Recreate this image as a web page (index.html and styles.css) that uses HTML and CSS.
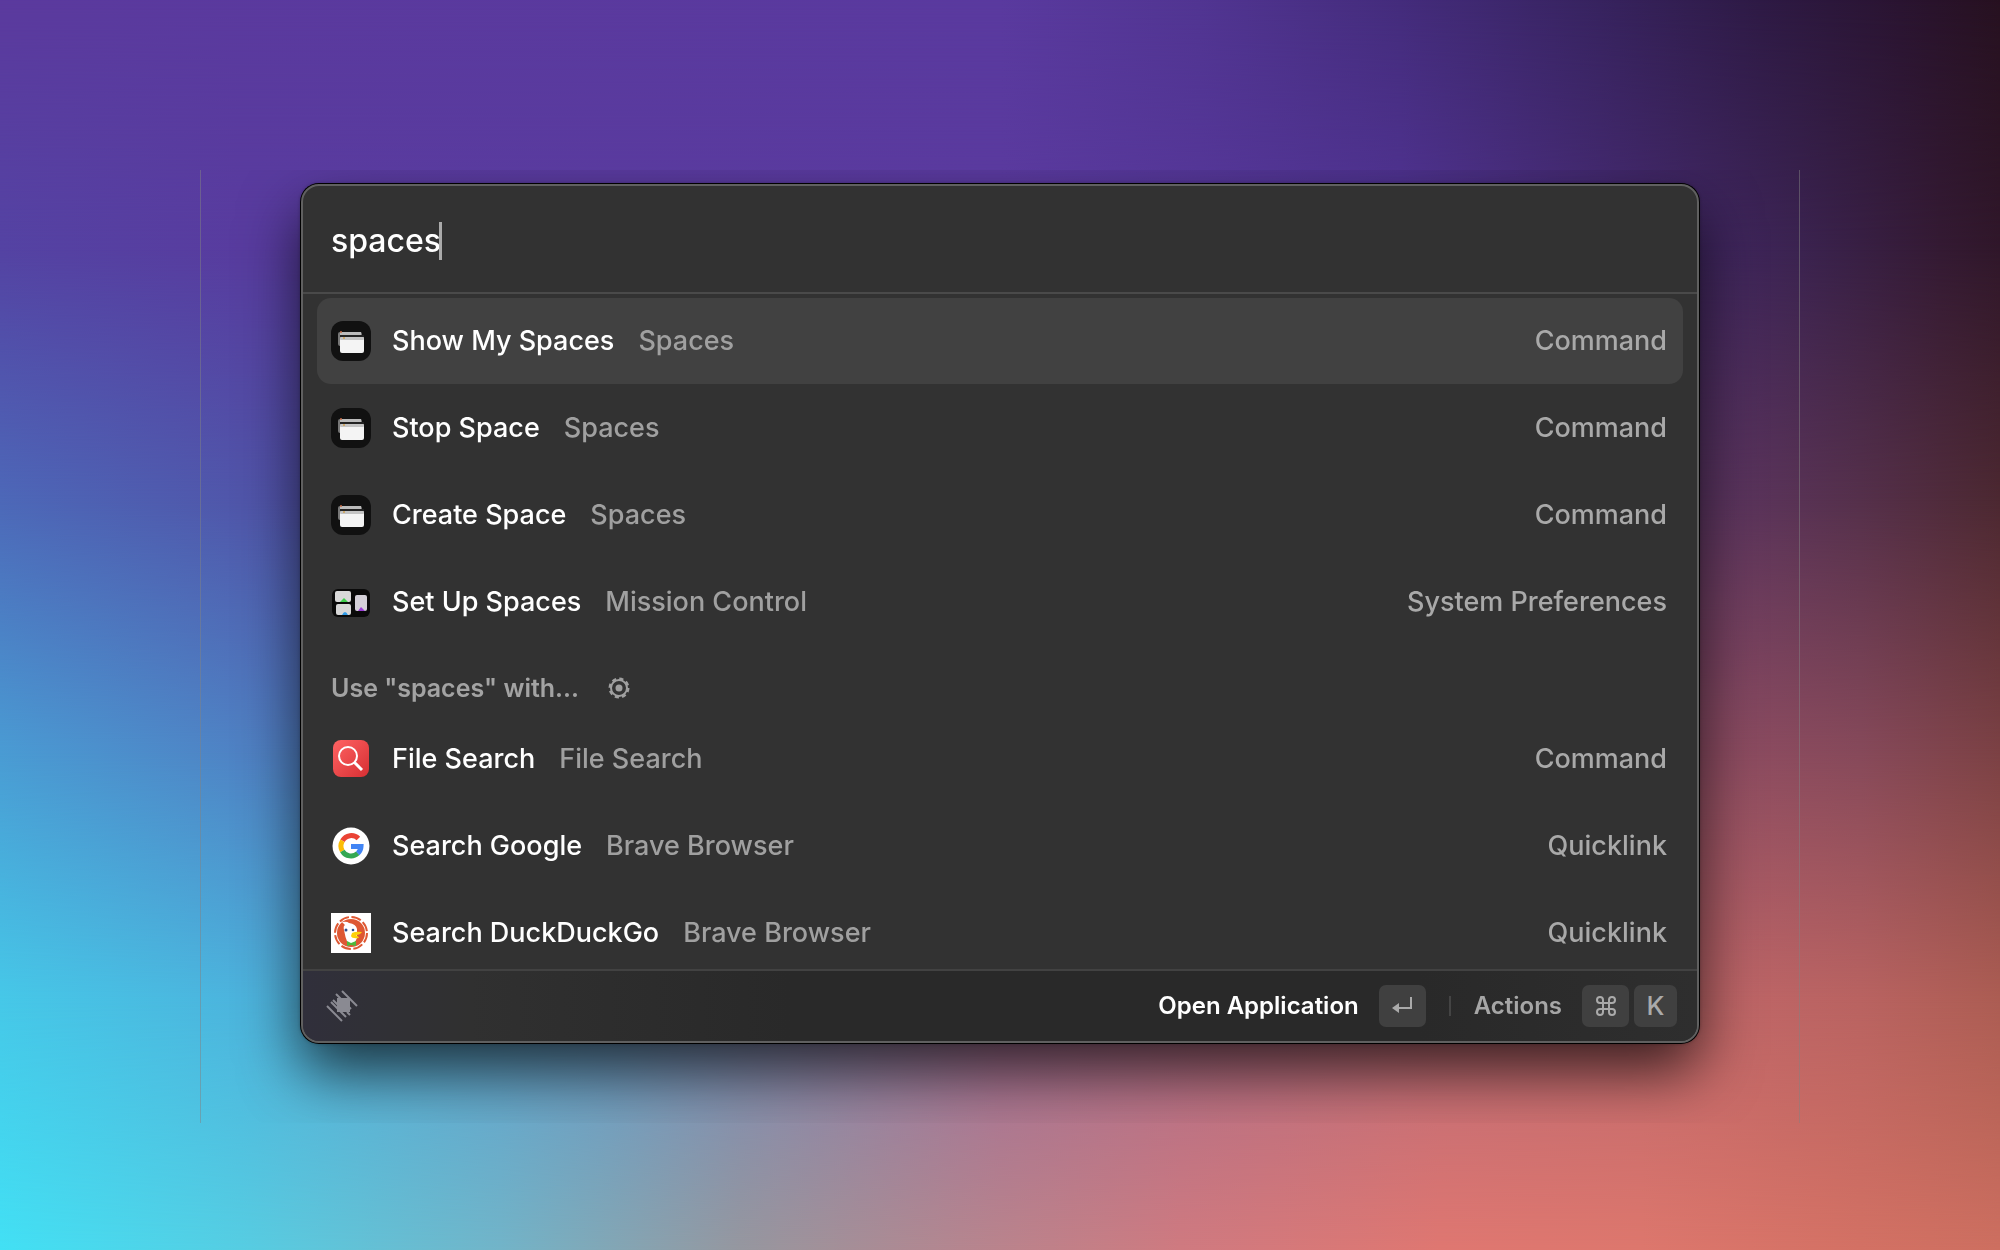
FILE: index.html
```html
<!DOCTYPE html>
<html lang="en">
<head>
<meta charset="utf-8">
<title>Launcher</title>
<link rel="stylesheet" href="styles.css">
</head>
<body>
<svg class="defs" aria-hidden="true">
  <symbol id="spaces" viewBox="0 0 40 40">
    <rect width="40" height="40" rx="12" fill="#111"/>
    <rect x="7" y="11" width="24" height="14" rx="2" fill="#777"/>
    <rect x="9" y="11" width="21" height="3" fill="#bbb"/>
    <rect x="9" y="14" width="24" height="3" fill="#222"/>
    <rect x="9" y="16" width="24" height="16" rx="2" fill="#f4f4f4"/>
    <rect x="9" y="16" width="24" height="3" rx="1" fill="#c4c4c4"/>
    <circle cx="10" cy="11" r="1" fill="#c76b45"/><circle cx="13" cy="17" r="1" fill="#d0a050"/>
  </symbol>
</svg>
<div class="backdrop" aria-hidden="true">
  <div class="band band-1"></div>
  <div class="band band-2"></div>
  <div class="band band-3"></div>
  <div class="band band-4"></div>
  <div class="band band-5"></div>
  <div class="band band-6"></div>
</div>
<main class="stage">
  <section class="window" aria-label="Launcher">
    <div class="search">
      <input class="query" type="text" value="spaces" aria-label="Search">
      <span class="caret"></span>
    </div>
    <div class="results">
      <ul class="list">
        <li><button class="row selected"><svg class="icon"><use href="#spaces"/></svg><span class="title">Show My Spaces</span><span class="sub">Spaces</span><span class="kind">Command</span></button></li>
        <li><button class="row"><svg class="icon"><use href="#spaces"/></svg><span class="title">Stop Space</span><span class="sub">Spaces</span><span class="kind">Command</span></button></li>
        <li><button class="row"><svg class="icon"><use href="#spaces"/></svg><span class="title">Create Space</span><span class="sub">Spaces</span><span class="kind">Command</span></button></li>
        <li><button class="row"><svg class="icon" viewBox="0 0 40 40">
          <rect x="1" y="7" width="38" height="28" rx="6" fill="#0a0a0a"/>
          <rect x="4" y="9" width="16" height="11" rx="2" fill="#d8d8d8"/><rect x="5" y="22" width="15" height="11" rx="2" fill="#d8d8d8"/><rect x="24" y="13" width="12" height="16" rx="2" fill="#d4d0d8"/>
          <path d="M9 20l4-4 4 4z" fill="#3fce4c"/><path d="M11 33q3-6 6 0z" fill="#2f9be8"/><path d="M27 29l3-4 4 4z" fill="#9a3fd6"/>
        </svg><span class="title">Set Up Spaces</span><span class="sub">Mission Control</span><span class="kind">System Preferences</span></button></li>
      </ul>
      <div class="heading"><h2>Use "spaces" with...</h2>
        <button class="gear" aria-label="Configure fallback commands"><svg viewBox="0 0 24 24" width="24" height="24"><circle cx="12" cy="12" r="9" fill="none" stroke="#a0a0a0" stroke-width="3" stroke-dasharray="4 3.07"/><circle cx="12" cy="12" r="8" fill="none" stroke="#a0a0a0" stroke-width="2"/><circle cx="12" cy="12" r="3.500" fill="#a0a0a0"/></svg></button>
      </div>
      <ul class="list">
        <li><button class="row"><svg class="icon" viewBox="0 0 40 40">
          <defs><linearGradient id="red" x1="0" y1="0" x2="1" y2="1"><stop stop-color="#ff6363"/><stop offset="1" stop-color="#d62f33"/></linearGradient></defs>
          <rect x="2" y="1" width="36" height="37" rx="8" fill="url(#red)"/><circle cx="17" cy="17" r="9" fill="none" stroke="#fff" stroke-width="2"/><path d="M23 23l8 8" stroke="#fff" stroke-width="3"/>
        </svg><span class="title">File Search</span><span class="sub">File Search</span><span class="kind">Command</span></button></li>
        <li><button class="row"><svg class="icon" viewBox="0 0 40 40">
          <circle cx="20" cy="20" r="18.500" fill="#fff"/>
          <g fill="none" stroke-width="5"><path d="M27.400 12.600A10 10 0 0 0 11.500 14.800" stroke="#ea4335"/><path d="M11.500 14.800A10 10 0 0 0 11.300 25" stroke="#fbbc05"/><path d="M11.300 25A10 10 0 0 0 26.800 27.300" stroke="#34a853"/><path d="M26.800 27.300A10 10 0 0 0 30 20.500H20" stroke="#4285f4"/></g>
        </svg><span class="title">Search Google</span><span class="sub">Brave Browser</span><span class="kind">Quicklink</span></button></li>
        <li><button class="row"><svg class="icon" viewBox="0 0 40 40">
          <path d="M0 0h40v40H0z" fill="#fff"/><circle cx="20" cy="20" r="16" fill="none" stroke="#de5833" stroke-width="2" stroke-dasharray="10 2.560"/><circle cx="20" cy="20" r="14" fill="#de5833"/>
          <path d="M11 9q5-1 7 1 7 1 8 6v9l-3 6h-6q-3-7-4-14-1-4 1-5z" fill="#fff"/><circle cx="15" cy="17" r="1.500" fill="#2d4f8e"/><circle cx="22" cy="17" r="1.300" fill="#2d4f8e"/>
          <path d="M21 20q4-2 10-1-2 3-6 3 3 2 3 3-7 1-8-2z" fill="#fdd20a"/><path d="M16 28l4 2 5-2v5l-5-1-4 1z" fill="#4cba3c"/>
        </svg><span class="title">Search DuckDuckGo</span><span class="sub">Brave Browser</span><span class="kind">Quicklink</span></button></li>
      </ul>
    </div>
    <footer class="bar">
      <svg class="logo" viewBox="0 0 32 32"><g stroke="#8a8a92" stroke-width="2" fill="none"><path d="M16 1l15 15M10 4l15 15M1 16l15 15M5 12l15 15M7 10l5 5M21 22l3 3"/></g><path d="M11 8h13v14H11z" fill="#8a8a92"/></svg>
      <button class="action primary">Open Application <kbd class="wide"><svg width="22" height="20" viewBox="0 0 22 20"><path d="M20 1v11H6" fill="none" stroke="#aaa" stroke-width="2"/><path d="M8 7v10l-7-5z" fill="#aaa"/></svg></kbd></button>
      <span class="divider"></span>
      <button class="action">Actions <span class="keys"><kbd class="wide"><svg width="20" height="20" viewBox="0 0 20 20"><path d="M7 7h6v6H7zM7 7V4a3 3 0 1 0-3 3zM13 7h3a3 3 0 1 0-3-3zM13 13v3a3 3 0 1 0 3-3zM7 13H4a3 3 0 1 0 3 3z" fill="none" stroke="#aaa" stroke-width="2"/></svg></kbd><kbd>K</kbd></span></button>
    </footer>
  </section>
</main>
</body>
</html>
```
FILE: styles.css
```css
* { box-sizing: border-box; }
body { margin: 0; min-height: 100vh; font-family: Inter, "Liberation Sans", sans-serif; color: #fff; }
.defs { position: absolute; width: 0; height: 0; }

/* Wallpaper: horizontal colour bands, each fading in over the one above it. */
.backdrop { position: fixed; inset: 0; z-index: -1; }
.band { position: absolute; inset: 0; }
.band-1 { background: linear-gradient(90deg, #5b3a9e 0%, #5a3a9f 50%, #513592 60%, #442c7c 70%, #37235f 80%, #2e1a45 88%, #2a1431 95%, #271120 100%); }
.band-2 { background: linear-gradient(90deg, #5443a3 0%, #583c9f 12%, #5a3a9e 50%, #513494 70%, #44296c 82%, #3b2350 90%, #341a33 97%, #30172a 100%); mask-image: linear-gradient(transparent 0%, #000 20%); }
.band-3 { background: linear-gradient(90deg, #4d68b8 0%, #5056aa 12%, #553e9c 30%, #553588 70%, #5c3560 86%, #55304b 93%, #4c2831 100%); mask-image: linear-gradient(transparent 20%, #000 40%); }
.band-4 { background: linear-gradient(90deg, #4a9bd3 0%, #4f82c4 12%, #5866b0 30%, #7d4c78 70%, #8d4c62 86%, #86495a 93%, #7b4144 100%); mask-image: linear-gradient(transparent 40%, #000 60%); }
.band-5 { background: linear-gradient(90deg, #46c8e8 0%, #4cb4dd 12%, #6699c4 30%, #a06e94 50%, #b96b78 70%, #bf6668 86%, #b96361 93%, #ac5d53 100%); mask-image: linear-gradient(transparent 60%, #000 80%); }
.band-6 { background: linear-gradient(90deg, #42e0f4 0%, #56cde2 12%, #72b4c8 25%, #96979f 37%, #b5868f 48%, #cf7a80 59%, #df7771 72%, #dd776d 82%, #d37164 93%, #cd6f60 100%); mask-image: linear-gradient(transparent 80%, #000 100%); }

.stage { margin: 170px 10% 0; padding: 14px 5% 80px; overflow: hidden; border: solid rgba(130, 130, 130, .5); border-width: 0 1px; }
.window { overflow: hidden; border: 2px solid #606060; border-radius: 18px; background: #323232; box-shadow: 0 0 0 1px #000, 0 0 4px rgba(0, 0, 0, .4), 0 28px 60px rgba(0, 0, 0, .7); }
.search { display: flex; align-items: center; height: 108px; padding: 4px 28px 0; border-bottom: 2px solid #4a4a4a; }
.query { width: 108px; padding: 0; border: 0; outline: 0; background: none; color: #fff; font: 500 32px/40px Inter, sans-serif; }
.caret { width: 3px; height: 38px; background: #aaa; }
.results { height: 675px; padding: 4px 14px 0; overflow: hidden; }
.list { display: grid; gap: 1px; margin: 0; padding: 0; list-style: none; }
.row { display: flex; align-items: center; width: 100%; height: 86px; padding: 0 16px 0 14px; border: 0; border-radius: 14px; background: none; color: #fff; font: 500 27px/36px Inter, sans-serif; text-align: left; }
.selected { background: #414141; }
.icon { width: 40px; height: 40px; margin-right: 21px; }
.sub { margin-left: 24px; color: #a0a0a0; }
.kind { margin-left: auto; color: #a9a9a9; }
.heading { display: flex; align-items: center; gap: 28px; height: 71px; padding: 14px 14px 0; }
.heading h2 { margin: 0; color: #a3a3a3; font: 600 25px/32px Inter, sans-serif; }
.gear { display: flex; padding: 0; border: 0; background: none; }
.bar { display: flex; align-items: center; height: 72px; padding: 0 20px 0 23px; border-top: 2px solid #424242; background: linear-gradient(90deg, #302f3b 0%, #303036 5%, #303030 12%, #292929 35%, #292929 80%, #2e2e2e 100%); }
.logo { width: 32px; height: 32px; margin-right: auto; }
.action { display: flex; align-items: center; gap: 20px; padding: 0; border: 0; background: none; color: #a6a6a6; font: 600 24px/32px Inter, sans-serif; }
.primary { color: #fff; }
.divider { width: 2px; height: 20px; margin: 0 23px; background: #444; }
.keys { display: flex; gap: 5px; }
kbd { display: flex; align-items: center; justify-content: center; width: 43px; height: 42px; border-radius: 7px; background: #404040; color: #aaa; font: 500 26px/32px Inter, sans-serif; }
.wide { width: 47px; }
```
